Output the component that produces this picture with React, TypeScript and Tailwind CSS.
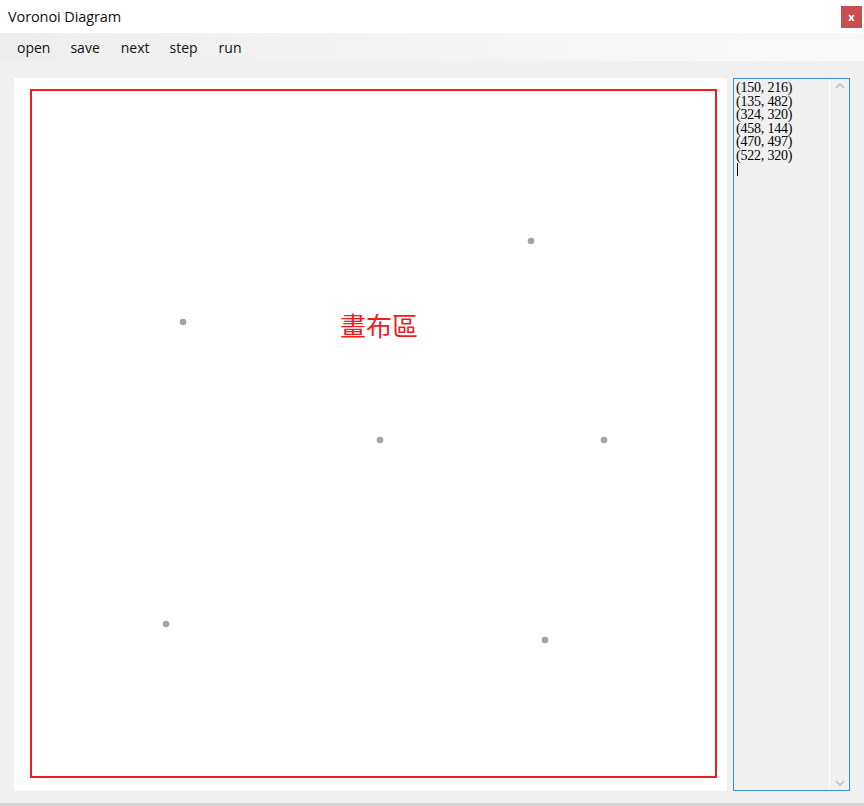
const points = [
  { x: 183, y: 322 },
  { x: 531, y: 241 },
  { x: 380, y: 440 },
  { x: 604, y: 440 },
  { x: 166, y: 624 },
  { x: 545, y: 640 },
]

const coords = ["(150, 216)", "(135, 482)", "(324, 320)", "(458, 144)", "(470, 497)", "(522, 320)"]

export default function App() {
  return (
    <div className="w-[864px] h-[806px] flex flex-col bg-[#f0f0f0] overflow-hidden" style={{ fontFamily: '"Open Sans", "Noto Sans", sans-serif' }}>
      {/* Title bar */}
      <div className="h-[33px] bg-white flex items-center justify-between pl-2 pr-[2px] shrink-0">
        <span className="text-[14.5px] text-[#111] tracking-[-0.1px]">Voronoi Diagram</span>
        <button className="w-[21px] h-[22px] bg-[#c94f4f] text-white text-[11px] font-bold flex items-center justify-center leading-none">
          x
        </button>
      </div>

      {/* Menu */}
      <div className="h-[28px] flex items-center pl-[17px] gap-[21px] text-[14px] text-[#111] bg-gradient-to-r from-[#eeeeee] to-[#f9f9f9] shrink-0">
        <span>open</span>
        <span className="-ml-[1px]">save</span>
        <span>next</span>
        <span className="-ml-[1px]">step</span>
        <span>run</span>
      </div>

      {/* Body */}
      <div className="flex pt-[17px] pl-[14px] gap-[6px] h-[730px] shrink-0">
        <div className="w-[713px] h-[713px] bg-white pl-[16px] pt-[11px]">
          <div className="relative w-[687px] h-[689px] border-2 border-[#f01d1d]">
            <svg className="absolute -left-[32px] -top-[91px]" width="713" height="791" viewBox="0 0 713 791">
              {points.map((p, i) => (
                <circle key={i} cx={p.x} cy={p.y} r="3.3" fill="#a3a3a3" />
              ))}
            </svg>
            <span
              className="absolute left-[308px] top-[221px] text-[26px] leading-none text-[#f01d1d]"
              style={{ fontFamily: '"Noto Sans CJK TC", sans-serif' }}
            >
              畫布區
            </span>
          </div>
        </div>

        <div className="w-[117px] h-[713px] border border-[#3d8fdc] bg-[#f0f0f0] flex">
          <div
            className="flex-1 pl-[2px] pt-[2px] text-[14px] leading-[13.5px] text-black"
            style={{ fontFamily: '"Liberation Serif", serif' }}
          >
            {coords.map((c) => (
              <div key={c} className="tracking-[-0.2px]">{c}</div>
            ))}
            <div className="w-[1px] h-[13px] bg-black ml-[1px] mt-[1px]" />
          </div>
          <div className="w-[20px] border-l border-white flex flex-col items-center justify-between py-[3px]">
            <svg width="12" height="8" viewBox="0 0 12 8">
              <path d="M2 6 L6 2 L10 6" stroke="#c2c2c2" strokeWidth="1.6" fill="none" />
            </svg>
            <svg width="12" height="8" viewBox="0 0 12 8">
              <path d="M2 2 L6 6 L10 2" stroke="#c2c2c2" strokeWidth="1.6" fill="none" />
            </svg>
          </div>
        </div>
      </div>

      <div className="flex-1" />
      <div className="h-[3px] bg-[#d6d6d6] shrink-0" />
    </div>
  )
}
